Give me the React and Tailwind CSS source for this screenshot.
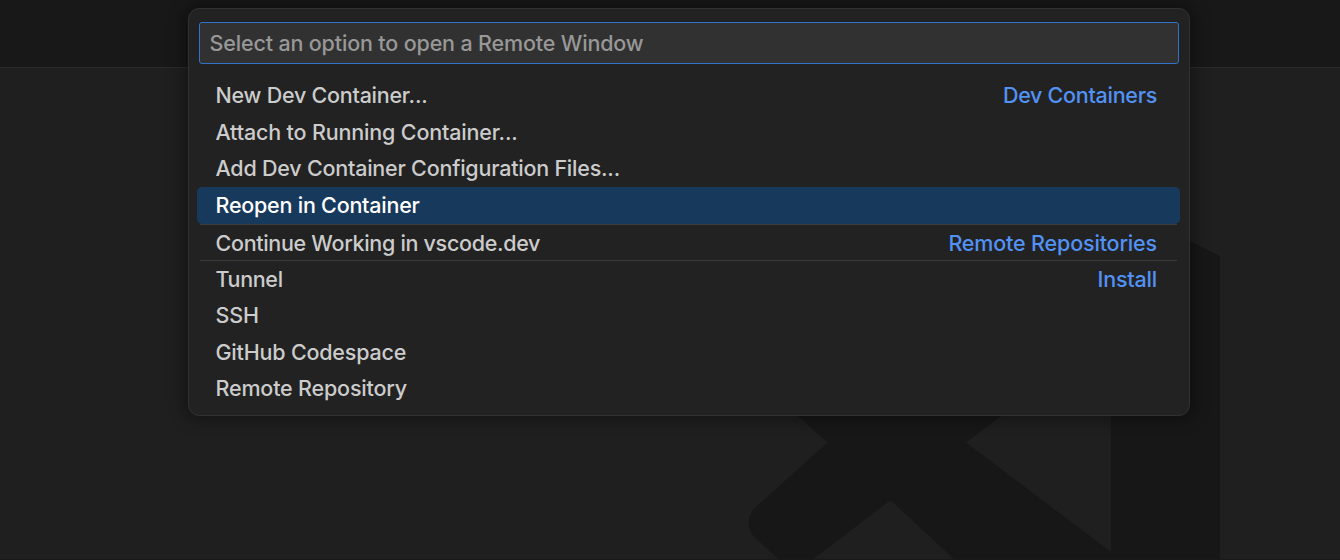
const rows = [
  { label: "New Dev Container...", tag: "Dev Containers", box: "h-[37px] pb-[2px]", track: "tracking-[-0.24px]", tagTrack: "tracking-[-0.28px]" },
  { label: "Attach to Running Container...", box: "h-[36px]", track: "tracking-[-0.16px]" },
  { label: "Add Dev Container Configuration Files...", box: "h-[37px] pb-[2px]", track: "tracking-[-0.22px]" },
  { label: "Reopen in Container", box: "h-[37px] pb-[2px]", track: "tracking-[-0.23px]", active: true },
  { label: "Continue Working in vscode.dev", tag: "Remote Repositories", box: "h-[36px] pt-[2px]", track: "tracking-[-0.31px]", tagTrack: "tracking-[-0.16px]", divided: true },
  { label: "Tunnel", tag: "Install", box: "h-[37px]", track: "tracking-[-0.35px]", tagTrack: "tracking-[-0.2px]", divided: true },
  { label: "SSH", box: "h-[36px]", track: "tracking-[-0.2px]" },
  { label: "GitHub Codespace", box: "h-[37px]", track: "tracking-[-0.2px]" },
  { label: "Remote Repository", box: "h-[36px]", track: "tracking-[-0.18px]" },
];

function Row({ label, tag, box, track, tagTrack, active, divided }) {
  return (
    <li
      className={`relative flex items-center justify-between pl-[18.5px] pr-[23px] ${box} ${
        active ? "rounded-[5px] bg-[#17395b] text-white" : "text-[#cccccc]"
      }`}
    >
      {divided && <span className="absolute top-0 left-[3px] right-[3px] h-px bg-[#3c3c3c]" />}
      <span className={track}>{label}</span>
      {tag && <span className={`text-[#5292f4] ${tagTrack}`}>{tag}</span>}
    </li>
  );
}

function Watermark() {
  return (
    <svg className="absolute inset-0" width="1340" height="560" viewBox="0 0 1340 560" fill="#171717">
      <path
        fillRule="evenodd"
        d="M1111 202 L1220 256 V560 H955 L890.500 500 L812 560 H779.500 L756 538.500 Q748.500 531.500 748.500 523 Q748.500 514 756 507 L827.500 442.500 L760 382 L1111 202 Z M966 442.500 L1111 552 V333 Z"
      />
    </svg>
  );
}

export default function App() {
  return (
    <div className="relative h-[560px] w-[1340px] overflow-hidden border-b border-[#191919] bg-[#1f1f1f] font-['Inter','Liberation_Sans',sans-serif] text-[21.5px] leading-[34px] font-[450]">
      <div className="h-[68px] border-b border-[#2b2b2b] bg-[#181818]" />
      <Watermark />
      <section className="absolute top-[8px] left-[188px] h-[408px] w-[1002px] rounded-[11px] border border-[#313131] bg-[#222222] px-[8px] pt-[13px] shadow-[0_0_16px_4px_rgba(0,0,0,0.36)]">
        <div className="ml-[2px] flex h-[42px] w-[980px] items-center rounded-[3px] border border-[#2f74c9] bg-[#313131] pl-[9.5px] tracking-[-0.16px] text-[#989898]">
          Select an option to open a Remote Window
        </div>
        <ul className="mt-[13px] w-[983px]">
          {rows.map((row) => (
            <Row key={row.label} {...row} />
          ))}
        </ul>
      </section>
    </div>
  );
}
